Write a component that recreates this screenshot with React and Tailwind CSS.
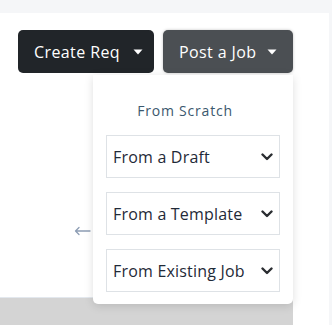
import React from 'react';

const Caret = () => (
  <svg width="10" height="6" viewBox="0 0 10 6" className="shrink-0">
    <path d="M0.5 0.5 L9.5 0.5 L5 5.5 Z" fill="currentColor" />
  </svg>
);

const Chevron = () => (
  <svg width="12" height="8" viewBox="0 0 12 8" className="shrink-0">
    <path d="M1.5 1.5 L6 6 L10.5 1.5" fill="none" stroke="#2a2d31" strokeWidth="2.4" strokeLinecap="round" strokeLinejoin="round" />
  </svg>
);

const SelectBox = ({ label }) => (
  <div className="h-[43px] border border-[#dee2e6] flex items-center justify-between pl-[6px] pr-[6px] text-[16px] tracking-[0.2px] text-[#1f2a38]">
    <span>{label}</span>
    <Chevron />
  </div>
);

const App = () => {
  const options = ['From a Draft', 'From a Template', 'From Existing Job'];

  return (
    <div
      className="w-[332px] h-[325px] bg-[#f5f6f8] pt-[13px] overflow-hidden"
      style={{ fontFamily: '"Open Sans", "Liberation Sans", sans-serif' }}
    >
      <div className="w-[329px] h-[312px] bg-white flex flex-col">
        {/* Action buttons */}
        <div className="pt-[17px] pl-[18px] flex gap-[9px]">
          <button className="h-[43px] w-[136px] rounded-[5px] bg-[#212529] text-white text-[16px] tracking-[0.4px] flex items-center pl-[16px] gap-[13px]">
            <span>Create Req</span>
            <Caret />
          </button>

          <div className="relative">
            <button className="h-[43px] w-[130px] rounded-[5px] bg-[#4b4f53] text-white text-[16px] tracking-[0.4px] flex items-center pl-[16px] gap-[10px] shadow-[0_0_3px_rgba(0,0,0,0.25)]">
              <span>Post a Job</span>
              <Caret />
            </button>

            {/* Dropdown menu */}
            <div className="absolute top-[45px] right-0 w-[200px] z-10 bg-white rounded-b-[5px] shadow-[0_2px_10px_rgba(0,0,0,0.13)] pt-[26px] px-[13px] pb-[12px]">
              <div className="text-center pr-[16px] text-[14px] leading-[20px] tracking-[0.8px] text-[#3b586d]">
                From Scratch
              </div>
              <div className="mt-[14px] flex flex-col gap-[14px]">
                {options.map((o) => (
                  <SelectBox key={o} label={o} />
                ))}
              </div>
            </div>
          </div>
        </div>

        {/* Pagination arrow under the menu */}
        <div className="mt-[151px] ml-[74px] h-[14px] flex items-center">
          <svg width="17" height="10" viewBox="0 0 17 10">
            <path d="M16 5 H1.5 M5 1.5 L1.5 5 L5 8.5" fill="none" stroke="#8d9db4" strokeWidth="1.3" strokeLinecap="round" strokeLinejoin="round" />
          </svg>
        </div>

        <div className="flex-1" />

        {/* Table header strip */}
        <div className="w-[293px] h-[28px] border-t border-[#e3e8ee] bg-[#d4d4d4]" />
      </div>
    </div>
  );
};

export default App;
